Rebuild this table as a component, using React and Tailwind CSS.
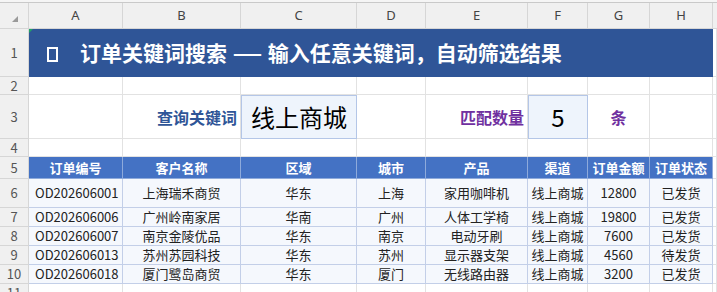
const cols = ["A", "B", "C", "D", "E", "F", "G", "H"];

const heads = ["订单编号", "客户名称", "区域", "城市", "产品", "渠道", "订单金额", "订单状态"];

const rows = [
  ["OD202606001", "上海瑞禾商贸", "华东", "上海", "家用咖啡机", "线上商城", "12800", "已发货"],
  ["OD202606006", "广州岭南家居", "华南", "广州", "人体工学椅", "线上商城", "19800", "已发货"],
  ["OD202606007", "南京金陵优品", "华东", "南京", "电动牙刷", "线上商城", "7600", "已发货"],
  ["OD202606013", "苏州苏园科技", "华东", "苏州", "显示器支架", "线上商城", "4560", "待发货"],
  ["OD202606018", "厦门鹭岛商贸", "华东", "厦门", "无线路由器", "线上商城", "3200", "已发货"],
];

const rowHeights = ["h-[48px]", "h-[18px]", "h-[44px]", "h-[18px]", "h-[22px]", "h-[29px]", "h-[19px]", "h-[19px]", "h-[19px]", "h-[19px]", "h-[19px]"];

function RowHead({ n, h }) {
  return (
    <div className={`${h} flex items-center justify-center border-r border-b border-[#d6d6d6] bg-[#f0f0f0] text-[13px] text-[#555]`}>
      {n}
    </div>
  );
}

function Blank({ h, extra = "" }) {
  return <div className={`${h} border-r border-b border-[#e2e2e2] bg-white ${extra}`} />;
}

export default function App() {
  return (
    <div className="h-[292px] w-[717px] overflow-hidden bg-white" style={{ fontFamily: '"Noto Sans CJK SC", "Noto Sans", sans-serif' }}>
      <div className="h-[3px] border-b border-[#c9c9c9] bg-[#f5f5f5]" />
      <div className="grid grid-cols-[29px_94px_118px_116px_69px_102px_60px_62px_63px_4px]">
        {/* column letters */}
        <div className="relative h-[26px] border-r border-b border-[#d6d6d6] bg-[#f0f0f0]">
          <div className="absolute bottom-[6px] right-[10px] h-0 w-0" style={{ borderBottom: "6px solid #9a9a9a", borderLeft: "6px solid transparent" }} />
        </div>
        {cols.map((c) => (
          <div key={c} className="flex h-[26px] items-center justify-center border-r border-b border-[#d6d6d6] bg-[#f0f0f0] text-[13px] text-[#444]" style={{ fontFamily: '"Noto Sans", sans-serif' }}>
            {c}
          </div>
        ))}
        <div className="h-[26px] border-b border-[#d6d6d6] bg-[#f0f0f0]" />

        {/* row 1 title */}
        <RowHead n="1" h={rowHeights[0]} />
        <div className="relative col-span-8 flex h-[48px] items-center bg-[#2f5597] pl-[18px] text-[21px] font-bold text-white">
          <div className="absolute left-0 top-0 h-0 w-0" style={{ borderTop: "4px solid #21a366", borderRight: "4px solid transparent" }} />
          <span className="mr-[22px] mt-[2px] inline-block h-[15px] w-[11px] border-2 border-white" />
          <span>
            订单关键词搜索 <span className="mx-[6px] inline-block scale-x-[1.6]">—</span> 输入任意关键词，自动筛选结果
          </span>
        </div>
        <Blank h={rowHeights[0]} />

        {/* row 2 */}
        <RowHead n="2" h={rowHeights[1]} />
        {cols.map((c) => <Blank key={c} h={rowHeights[1]} />)}
        <Blank h={rowHeights[1]} />

        {/* row 3 */}
        <RowHead n="3" h={rowHeights[2]} />
        <Blank h={rowHeights[2]} />
        <div className="flex h-[44px] items-center justify-end border-r border-b border-[#e2e2e2] pr-[3px] text-[16px] font-bold text-[#2f5597]">查询关键词</div>
        <div className="flex h-[44px] items-center justify-center border border-[#b4c6e7] bg-[#eef4fc] text-[24px] text-black">线上商城</div>
        <Blank h={rowHeights[2]} />
        <div className="flex h-[44px] items-center justify-end border-r border-b border-[#e2e2e2] pr-[3px] text-[16px] font-bold text-[#7030a0]">匹配数量</div>
        <div className="flex h-[44px] items-center justify-center border border-[#b4c6e7] bg-[#eef4fc] text-[24px] text-black">5</div>
        <div className="flex h-[44px] items-center justify-center border-r border-b border-[#e2e2e2] text-[16px] font-bold text-[#7030a0]">条</div>
        <Blank h={rowHeights[2]} />
        <Blank h={rowHeights[2]} />

        {/* row 4 */}
        <RowHead n="4" h={rowHeights[3]} />
        {cols.map((c) => <Blank key={c} h={rowHeights[3]} />)}
        <Blank h={rowHeights[3]} />

        {/* row 5 header */}
        <RowHead n="5" h={rowHeights[4]} />
        {heads.map((t) => (
          <div key={t} className="flex h-[22px] items-center justify-center border-r border-b border-[#8eaadb] bg-[#4472c4] text-[13px] font-bold text-white">
            {t}
          </div>
        ))}
        <Blank h={rowHeights[4]} />

        {/* data rows */}
        {rows.map((r, i) => (
          <div key={r[0]} className="contents">
            <RowHead n={String(i + 6)} h={rowHeights[5 + i]} />
            {r.map((v, j) => (
              <div
                key={j}
                className={`${rowHeights[5 + i]} flex items-center border-r border-b border-[#c3cfe8] bg-[#f5f8fd] text-[13px] text-[#222] ${j === 0 ? "pl-[6px]" : "justify-center"}`}
              >
                {v}
              </div>
            ))}
            <Blank h={rowHeights[5 + i]} />
          </div>
        ))}

        {/* row 11 */}
        <RowHead n="11" h={rowHeights[10]} />
        {cols.map((c) => <Blank key={c} h={rowHeights[10]} />)}
        <Blank h={rowHeights[10]} />
      </div>
    </div>
  );
}
